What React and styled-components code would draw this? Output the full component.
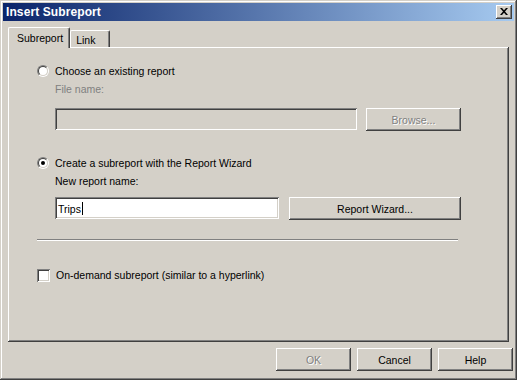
import React from "react";
import styled, { createGlobalStyle, css } from "styled-components";

const Global = createGlobalStyle`
  html, body { margin: 0; padding: 0; background: #d4d0c8; }
  body { font-family: "Liberation Sans", Arial, sans-serif; font-size: 10.5px; color: #000; }
  * { box-sizing: border-box; }
`;

const raised = css`
  box-shadow: inset -1px -1px #404040, inset 1px 1px #ffffff,
    inset -2px -2px #808080, inset 2px 2px #d4d0c8;
`;
const sunken = css`
  box-shadow: inset 1px 1px #808080, inset -1px -1px #ffffff,
    inset 2px 2px #404040, inset -2px -2px #d4d0c8;
`;

const Window = styled.div`
  width: 517px;
  height: 380px;
  background: #d4d0c8;
  padding: 3px;
  display: flex;
  flex-direction: column;
  box-shadow: inset -1px -1px #404040, inset 1px 1px #d4d0c8,
    inset -2px -2px #808080, inset 2px 2px #ffffff;
`;

const TitleBar = styled.div`
  height: 18px;
  background: linear-gradient(to right, #0a246a, #a6caf0);
  display: flex;
  align-items: center;
  justify-content: space-between;
  padding: 0 2px 0 3px;
`;

const Title = styled.span`
  color: #fff;
  font-weight: bold;
  font-size: 12px;
  letter-spacing: 0.1px;
`;

const CloseButton = styled.div`
  width: 16px;
  height: 14px;
  background: #d4d0c8;
  ${raised};
  display: flex;
  align-items: center;
  justify-content: center;
  padding-right: 1px;
  padding-bottom: 1px;
`;

const TabStrip = styled.div`
  display: flex;
  align-items: flex-end;
  height: 26px;
  margin: 0 5px;
  position: relative;
  z-index: 1;
`;

const Tab = styled.div`
  height: ${(p) => (p.$active ? 21 : 17)}px;
  padding: ${(p) => (p.$active ? "0 6px 0 8px" : "0 14px 0 5px")};
  display: flex;
  align-items: center;
  background: #d4d0c8;
  margin-bottom: ${(p) => (p.$active ? -1 : 0)}px;
  border-top: 1px solid #fff;
  border-left: 1px solid #fff;
  border-right: 1px solid #404040;
  box-shadow: inset -1px 0 #808080;
  border-radius: 2px 2px 0 0;
  font-size: 10.5px;
  padding-top: ${(p) => (p.$active ? 0 : 2)}px;
`;

const Panel = styled.div`
  height: 295px;
  margin: 0 5px;
  padding: 16px 0 0 29px;
  background: #d4d0c8;
  box-shadow: inset -1px -1px #404040, inset 1px 1px #ffffff,
    inset -2px -2px #808080;
  display: flex;
  flex-direction: column;
`;

const OptionRow = styled.label`
  display: flex;
  align-items: center;
  height: 16px;
  gap: 6px;
  margin-top: ${(p) => p.$mt || 0}px;
`;

const Radio = styled.span`
  position: relative;
  width: 12px;
  height: 12px;
  border-radius: 50%;
  border: 1px solid;
  border-color: #808080 #ffffff #ffffff #808080;
  &::before {
    content: "";
    position: absolute;
    inset: 0;
    border-radius: 50%;
    border: 1px solid;
    border-color: #404040 #d4d0c8 #d4d0c8 #404040;
    background: #fff;
  }
  &::after {
    content: "";
    display: ${(p) => (p.$checked ? "block" : "none")};
    position: absolute;
    width: 4px;
    height: 4px;
    left: 3px;
    top: 3px;
    border-radius: 50%;
    background: #000;
  }
`;

const Checkbox = styled.span`
  width: 13px;
  height: 13px;
  background: #fff;
  ${sunken};
`;

const Indented = styled.div`
  padding-left: 18px;
  display: flex;
  flex-direction: column;
`;

const Label = styled.div`
  height: 16px;
  line-height: 16px;
  margin-top: 2px;
  color: ${(p) => (p.$disabled ? "#808080" : "#000")};
`;

const FieldRow = styled.div`
  display: flex;
  align-items: flex-start;
  gap: ${(p) => p.$gap}px;
  margin-top: ${(p) => p.$mt}px;
`;

const TextField = styled.div`
  width: ${(p) => p.$w}px;
  height: 22px;
  background: ${(p) => (p.$disabled ? "#d4d0c8" : "#fff")};
  ${sunken};
  display: flex;
  align-items: center;
  padding-left: 3px;
  padding-top: 1px;
`;

const Caret = styled.span`
  display: inline-block;
  width: 1px;
  height: 13px;
  background: #000;
  margin-left: 1px;
`;

const Button = styled.div`
  width: ${(p) => p.$w}px;
  height: 23px;
  background: #d4d0c8;
  ${raised};
  display: flex;
  align-items: center;
  justify-content: center;
  color: ${(p) => (p.$disabled ? "#808080" : "#000")};
  text-shadow: ${(p) => (p.$disabled ? "1px 1px #fff" : "none")};
`;

const Separator = styled.div`
  width: 421px;
  height: 2px;
  border-top: 1px solid #808080;
  border-bottom: 1px solid #fff;
  margin-top: 19px;
`;

const Footer = styled.div`
  display: flex;
  justify-content: flex-end;
  gap: 6px;
  margin-top: 6px;
  padding-right: 1px;
`;

export default function App() {
  return (
    <>
      <Global />
      <Window>
        <TitleBar>
          <Title>Insert Subreport</Title>
          <CloseButton>
            <svg width="8" height="7" viewBox="0 0 8 7">
              <path d="M0 0h2l2 2.2L6 0h2L5 3.5 8 7H6L4 4.8 2 7H0l3-3.5z" fill="#000" />
            </svg>
          </CloseButton>
        </TitleBar>
        <TabStrip>
          <Tab $active>Subreport</Tab>
          <Tab>Link</Tab>
        </TabStrip>
        <Panel>
          <OptionRow>
            <Radio />
            <span>Choose an existing report</span>
          </OptionRow>
          <Indented>
            <Label $disabled>File name:</Label>
            <FieldRow $gap={9} $mt={11}>
              <TextField $w={302} $disabled />
              <Button $w={95} $disabled>Browse...</Button>
            </FieldRow>
          </Indented>
          <OptionRow $mt={24}>
            <Radio $checked />
            <span>Create a subreport with the Report Wizard</span>
          </OptionRow>
          <Indented>
            <Label>New report name:</Label>
            <FieldRow $gap={10} $mt={8}>
              <TextField $w={224}>
                Trips<Caret />
              </TextField>
              <Button $w={172}>Report Wizard...</Button>
            </FieldRow>
          </Indented>
          <Separator />
          <OptionRow $mt={26}>
            <Checkbox />
            <span>On-demand subreport (similar to a hyperlink)</span>
          </OptionRow>
        </Panel>
        <Footer>
          <Button $w={75} $disabled>OK</Button>
          <Button $w={75}>Cancel</Button>
          <Button $w={75}>Help</Button>
        </Footer>
      </Window>
    </>
  );
}
